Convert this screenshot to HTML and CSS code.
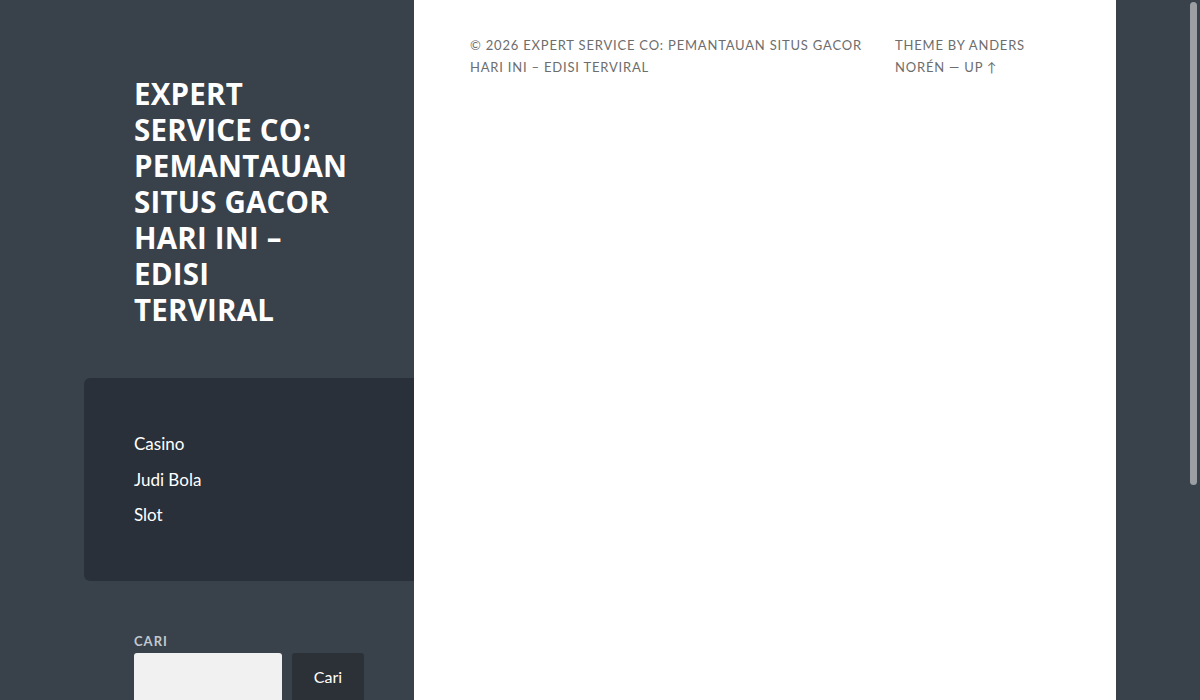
FILE: index.html
```html
<!DOCTYPE html>
<html lang="id">
<head>
<meta charset="utf-8">
<title>Expert Service Co</title>
<link rel="stylesheet" href="styles.css">
</head>
<body>
<div class="wrapper">
  <aside class="sidebar">
    <header class="site-header">
      <h1 class="site-title">EXPERT SERVICE CO: PEMANTAUAN SITUS GACOR HARI INI – EDISI TERVIRAL</h1>
    </header>
    <nav class="menu-box">
      <ul class="menu">
        <li>Casino</li>
        <li>Judi Bola</li>
        <li>Slot</li>
      </ul>
    </nav>
    <div class="search">
      <label class="search-label">CARI</label>
      <div class="search-row">
        <div class="search-input"></div>
        <div class="search-btn">Cari</div>
      </div>
    </div>
  </aside>
  <main class="content">
    <footer class="credits">
      <p class="copy">© 2026 EXPERT SERVICE CO: PEMANTAUAN SITUS GACOR HARI INI – EDISI TERVIRAL</p>
      <p class="theme">THEME BY ANDERS NORÉN — UP ↑</p>
    </footer>
  </main>
</div>
<div class="scrollbar"><div class="thumb"></div></div>
</body>
</html>
```

FILE: styles.css
```css
html, body {
  margin: 0;
  padding: 0;
  height: 100%;
  overflow: hidden;
}
body {
  background: #39414a;
  font-family: Lato, "Liberation Sans", sans-serif;
}
.wrapper {
  display: flex;
  height: 700px;
}
.sidebar {
  width: 414px;
  flex: none;
}
.site-header {
  padding: 76px 60px 0 134px;
}
.site-title {
  margin: 0;
  font-family: "Open Sans", "DejaVu Sans", sans-serif;
  font-weight: 700;
  font-size: 29.5px;
  line-height: 36px;
  color: #fff;
  letter-spacing: 0.2px;
}
.menu-box {
  margin: 50px 0 0 84px;
  background: #29303a;
  border-radius: 6px 0 0 6px;
  padding: 48px 0 48px 50px;
}
.menu {
  list-style: none;
  margin: 0;
  padding: 0;
}
.menu li {
  color: #fff;
  font-size: 17px;
  line-height: 35.5px;
}
.search {
  padding: 51px 0 0 134px;
}
.search-label {
  display: block;
  font-size: 13px;
  font-weight: 700;
  letter-spacing: 1px;
  line-height: 18px;
  color: #c3c8ce;
  margin-bottom: 3px;
}
.search-row {
  display: flex;
  gap: 10px;
}
.search-input {
  width: 148px;
  height: 50px;
  background: #f1f1f1;
  border-radius: 3px;
}
.search-btn {
  width: 72px;
  height: 50px;
  background: #2c3138;
  border-radius: 3px;
  color: #fff;
  font-size: 16px;
  display: flex;
  align-items: center;
  justify-content: center;
  padding-bottom: 2px;
  box-sizing: border-box;
}
.content {
  width: 702px;
  flex: none;
  background: #fff;
}
.credits {
  display: flex;
  gap: 25px;
  padding: 34px 56px 0 56px;
}
.credits p {
  margin: 0;
  font-size: 13px;
  line-height: 22px;
  letter-spacing: 0.8px;
  color: #6d6d6d;
}
.copy {
  width: 400px;
}
.theme {
  width: 165px;
}
.scrollbar {
  position: fixed;
  top: 0;
  right: 0;
  width: 12px;
  height: 700px;
}
.thumb {
  margin: 2px 0 0 2px;
  width: 7px;
  height: 483px;
  background: #9b9fa4;
  border-radius: 4px;
}
```
